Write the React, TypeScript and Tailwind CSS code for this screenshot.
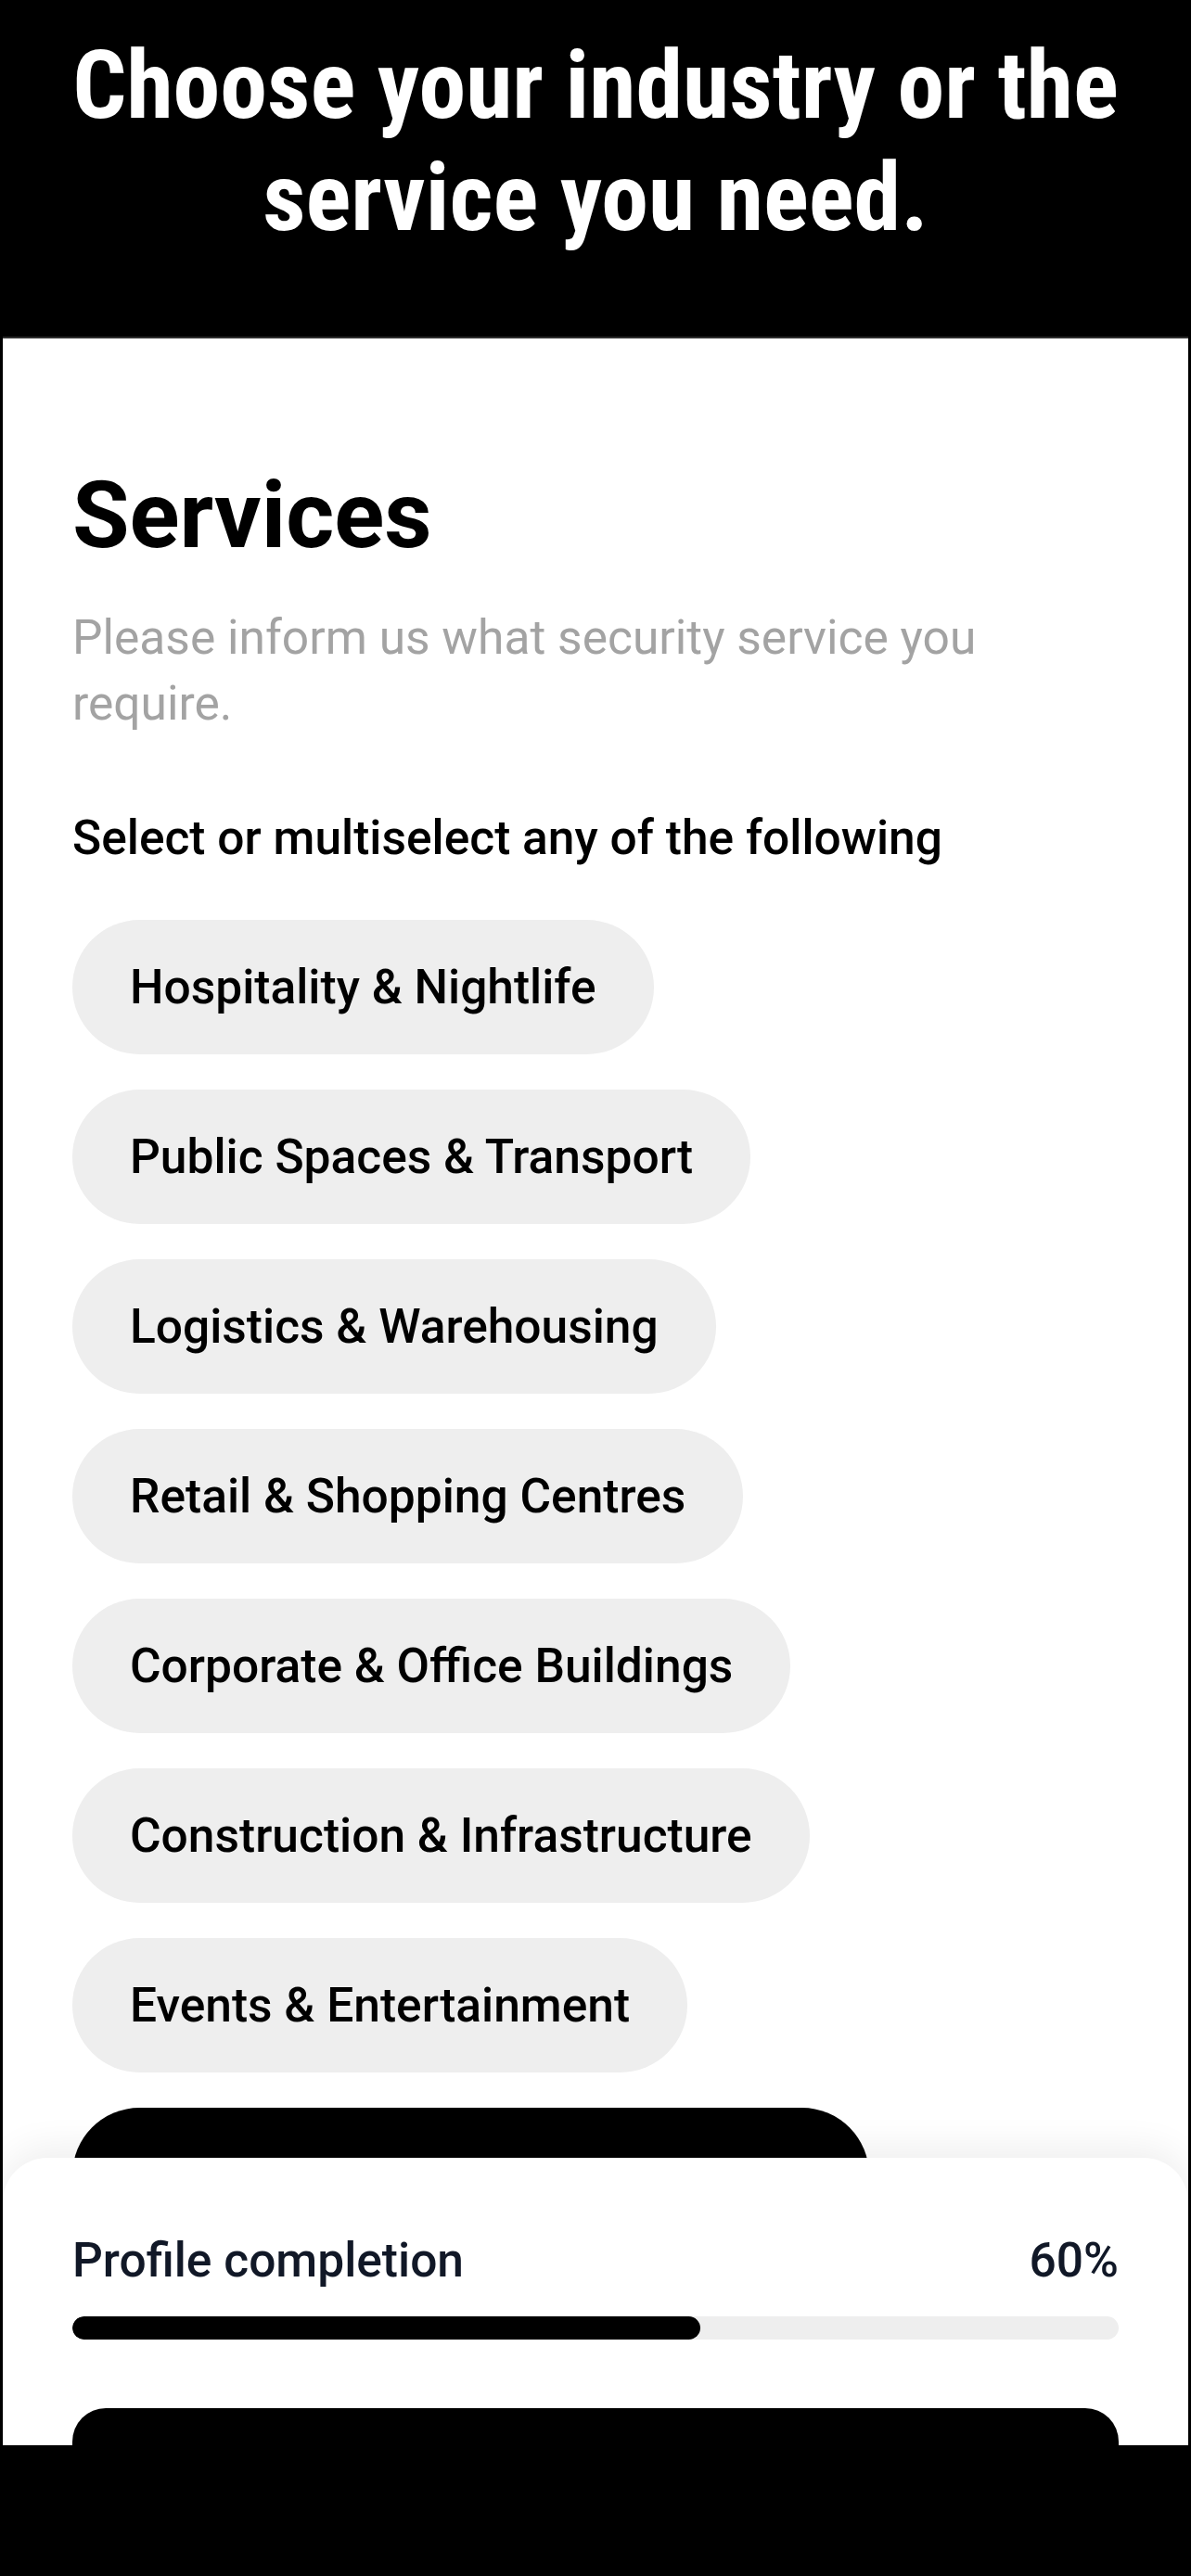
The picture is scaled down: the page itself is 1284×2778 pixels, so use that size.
const services = [
  'Hospitality & Nightlife',
  'Public Spaces & Transport',
  'Logistics & Warehousing',
  'Retail & Shopping Centres',
  'Corporate & Office Buildings',
  'Construction & Infrastructure',
  'Events & Entertainment',
];

function ServicePill({ label }: { label: string }) {
  return (
    <button className="h-[145px] px-[62px] flex items-center rounded-full bg-[#eeeeee] text-[51.5px] leading-none font-medium text-black">
      {label}
    </button>
  );
}

export default function App() {
  const progress = 60;

  return (
    <div className="w-[1284px] h-[2778px] bg-black flex flex-col overflow-hidden font-['Roboto',sans-serif]">
      <header className="h-[363px] shrink-0 pt-[32px] text-center text-white font-bold text-[102px] leading-[121px] font-['Roboto_Condensed','Roboto',sans-serif] [font-stretch:condensed]">
        Choose your industry or the
        <br />
        service you need.
      </header>

      <main className="relative mx-[3px] h-[2274px] shrink-0 bg-white overflow-hidden border-t-2 border-[#2e2e2e]">
        <div className="px-[75px] pt-[131px] flex flex-col items-start">
          <h1 className="text-[100px] leading-[120px] font-bold text-black">Services</h1>
          <p className="mt-[36px] max-w-[1080px] text-[51.5px] leading-[71px] text-[#a3a3a3]">
            Please inform us what security service you require.
          </p>
          <p className="mt-[80px] text-[51.5px] leading-[60px] font-medium text-black">
            Select or multiselect any of the following
          </p>
          <div className="mt-[58px] flex flex-col items-start gap-[38px]">
            {services.map((s) => (
              <ServicePill key={s} label={s} />
            ))}
            <button className="h-[145px] w-[859px] rounded-full bg-black" />
          </div>
        </div>

        <div className="absolute inset-x-0 bottom-0 h-[310px] rounded-t-[48px] bg-white px-[75px] pt-[81px] shadow-[0_-10px_40px_rgba(0,0,0,0.07)]">
          <div className="flex justify-between text-[51.5px] leading-[60px] font-medium text-[#111827]">
            <span>Profile completion</span>
            <span>{progress}%</span>
          </div>
          <div className="mt-[30px] h-[25px] rounded-full bg-[#eeeeee] overflow-hidden">
            <div className="h-full rounded-full bg-black" style={{ width: `${progress}%` }} />
          </div>
          <button className="mt-[74px] w-full h-[150px] rounded-[36px] bg-black" />
        </div>
      </main>

      <div className="flex-1 bg-black" />
    </div>
  );
}
